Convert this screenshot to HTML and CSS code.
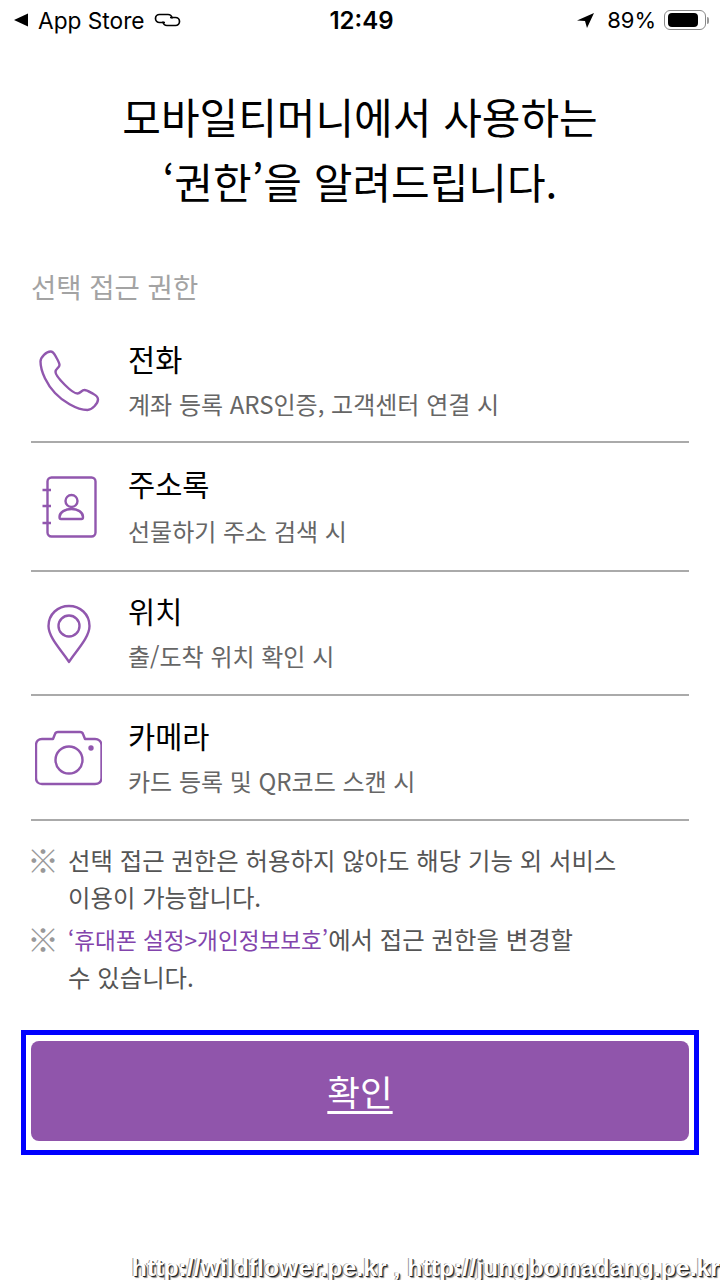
FILE: index.html
```html
<!DOCTYPE html>
<html lang="ko">
<head>
    <meta charset="UTF-8">
    <meta name="viewport" content="width=device-width, initial-scale=1.0">
    <title>권한 안내</title>
    <link rel="stylesheet" href="styles.css">
</head>
<body>

    <div class="status">
        <div class="status-left">
            <svg class="back" width="14" height="14" viewBox="0 0 14 14"><path d="M14 0.500V13.500L0 7Z" fill="#000"/></svg>
            <span>App Store</span>
            <svg class="link" width="27" height="14" viewBox="0 0 27 14" fill="none" stroke="#000" stroke-width="1.700"><path d="M11 9.500H5.500a4 4 0 0 1 0-8H14a4 4 0 0 1 4 4"/><path d="M16 4.500H21.500a4 4 0 0 1 0 8H13a4 4 0 0 1-4-4"/></svg>
        </div>
        <div class="status-time">12:49</div>
        <div class="status-right">
            <svg width="17" height="15" viewBox="0 0 17 15"><path d="M17 0L0 7.500L8 8L10 15Z" fill="#000"/></svg>
            <span>89%</span>
            <div class="battery"><div class="battery-fill"></div></div>
            <div class="battery-cap"></div>
        </div>
    </div>

    <h1 class="title">모바일티머니에서 사용하는<br>‘권한’을 알려드립니다.</h1>

    <h2 class="section">선택 접근 권한</h2>

    <ul class="perm-list">
        <li class="perm perm-phone">
            <div class="perm-icon">
                <svg width="62" height="62" viewBox="0 0 62 62" fill="none" stroke="#9157ae" stroke-width="2.400" stroke-linejoin="round"><path d="M2.500 11.500C2.500 7 8.500 1.500 12.500 1.500C15 1.500 16 3 17.500 6C19 9 21.500 12.500 21.500 15C21.500 18 17.500 18.500 17.500 22C17.500 25 22.500 30.500 27 35C31.500 39.500 36.500 43.500 39.500 43.500C42.500 43.500 43.500 40 46.500 40C49 40 52.500 42.500 55.500 44C58.500 45.500 60 47 60 49.500C60 53.500 54 60 49.500 60C38 60 24 50.500 17 43C9.500 35 2.500 22 2.500 11.500Z"/></svg>
            </div>
            <div class="perm-text">
                <div class="perm-name">전화</div>
                <div class="perm-desc">계좌 등록 ARS인증, 고객센터 연결 시</div>
            </div>
        </li>
        <li class="perm perm-book">
            <div class="perm-icon">
                <svg width="62" height="62" viewBox="0 0 62 62" fill="none" stroke="#9157ae" stroke-width="2.400"><rect x="9.500" y="1.500" width="48" height="59" rx="4"/><path d="M4.500 14H13M4.500 30H13M4.500 47H13"/><circle cx="33.500" cy="25" r="6"/><path d="M21.500 41C21.500 36 27.500 33 33.500 33C39.500 33 45 36 45 41C45 42.500 44.500 43 43.500 43H23C22 43 21.500 42.500 21.500 41Z"/></svg>
            </div>
            <div class="perm-text">
                <div class="perm-name">주소록</div>
                <div class="perm-desc">선물하기 주소 검색 시</div>
            </div>
        </li>
        <li class="perm perm-pin">
            <div class="perm-icon">
                <svg width="62" height="62" viewBox="0 0 62 62" fill="none" stroke="#9157ae" stroke-width="2.400" stroke-linejoin="round"><path d="M31 60C25 50 10.500 36 10.500 24C10.500 12 20 4 31 4C42 4 51.500 12 51.500 24C51.500 36 37 50 31 60Z"/><circle cx="31" cy="24" r="10.500"/></svg>
            </div>
            <div class="perm-text">
                <div class="perm-name">위치</div>
                <div class="perm-desc">출/도착 위치 확인 시</div>
            </div>
        </li>
        <li class="perm perm-camera">
            <div class="perm-icon">
                <svg width="67" height="56" viewBox="0 0 67 56" fill="none" stroke="#9157ae" stroke-width="2.400" stroke-linejoin="round"><path d="M7 9H18L20 4C20.500 2.500 21.500 2 23 2H45C46.500 2 47.500 2.500 48 4L50 9H60C63.500 9 66.500 11.500 66.500 15V48C66.500 52 63.500 54 60 54H7C3.500 54 1 52 1 48V15C1 11.500 3.500 9 7 9Z"/><circle cx="34" cy="30" r="13.500"/><circle cx="56" cy="18" r="1.500" fill="#9157ae"/></svg>
            </div>
            <div class="perm-text">
                <div class="perm-name">카메라</div>
                <div class="perm-desc">카드 등록 및 QR코드 스캔 시</div>
            </div>
        </li>
    </ul>

    <div class="notes">
        <div class="note">
            <span class="note-mark">※</span>
            <p>선택 접근 권한은 허용하지 않아도 해당 기능 외 서비스<br>이용이 가능합니다.</p>
        </div>
        <div class="note">
            <span class="note-mark">※</span>
            <p><span class="accent">‘휴대폰 설정&gt;개인정보보호’</span>에서 접근 권한을 변경할<br>수 있습니다.</p>
        </div>
    </div>

    <div class="confirm-box">
        <button type="button" class="confirm">확인</button>
    </div>

    <div class="watermark">http://wildflower.pe.kr , http://jungbomadang.pe.kr</div>

</body>
</html>
```

FILE: styles.css
```css
* {
    box-sizing: border-box;
}

html, body {
    height: 1280px;
    overflow: hidden;
}

body {
    position: relative;
    margin: 0;
    background: #fff;
    color: #000;
    font-family: "Noto Sans CJK KR", "Noto Sans", sans-serif;
}

.status {
    display: flex;
    align-items: center;
    justify-content: space-between;
    height: 40px;
    padding: 0 11px 0 14px;
    font-family: Inter, "Liberation Sans", sans-serif;
    font-size: 22.700px;
}

.status-left,
.status-right {
    display: flex;
    align-items: center;
    width: 240px;
}

.status-left span {
    margin-left: 10px;
}

.link {
    margin-left: 9px;
}

.status-right {
    justify-content: flex-end;
    font-size: 22px;
}

.status-right span {
    margin: 0 8px 0 13px;
}

.status-time {
    font-size: 24px;
    font-weight: 600;
}

.battery {
    width: 42px;
    height: 20px;
    padding: 2px 7px 2px 3px;
    border: 1.500px solid #888;
    border-radius: 6px;
}

.battery-fill {
    height: 100%;
    background: #000;
    border-radius: 4px;
}

.battery-cap {
    width: 2px;
    height: 7px;
    margin-left: 1px;
    background: #999;
    border-radius: 0 2px 2px 0;
}

.title {
    margin: 43px 0 0;
    font-size: 42px;
    font-weight: 400;
    line-height: 65px;
    text-align: center;
}

.section {
    margin: 53px 31px 0;
    color: #a3a3a3;
    font-size: 27.500px;
    font-weight: 400;
    line-height: 40px;
}

.perm-list {
    margin: 3px 31px 0;
    padding: 0;
    list-style: none;
}

.perm {
    display: flex;
    align-items: center;
    padding-bottom: 3px;
    border-bottom: 2px solid #aaa;
}

.perm-phone {
    height: 134px;
    padding-top: 12px;
}

.perm-book {
    height: 129px;
}

.perm-pin {
    height: 124px;
}

.perm-camera {
    height: 125px;
}

.perm-icon {
    display: flex;
    flex: none;
    justify-content: center;
    width: 97px;
    margin-top: 3px;
    padding-right: 22px;
}

.perm-name {
    font-size: 29.500px;
    line-height: 42px;
}

.perm-desc {
    margin-top: 7px;
    color: #666;
    font-size: 24px;
    line-height: 36px;
}

.perm-book .perm-desc {
    margin-top: 9px;
}

.notes {
    margin: 20px 31px 0;
}

.note {
    display: flex;
    margin-bottom: 5px;
    color: #555;
    font-size: 24.400px;
    line-height: 37px;
}

.note p {
    margin: 0;
}

.note-mark {
    flex: none;
    width: 37px;
    margin-left: -4px;
    margin-right: 4px;
    color: #999;
    font-size: 32px;
}

.accent {
    color: #8244ac;
    font-size: 22.600px;
}

.confirm-box {
    width: 678px;
    height: 125px;
    margin: 35px 0 0 21px;
    padding: 6px 5px 9px;
    border: 5px solid #0000ff;
}

.confirm {
    display: block;
    width: 100%;
    height: 100%;
    padding: 0 0 2px;
    border: none;
    border-radius: 8px;
    background: #9055ab;
    color: #fff;
    font-family: inherit;
    font-size: 35.500px;
    text-decoration: underline;
    text-underline-offset: 5px;
}

.watermark {
    position: absolute;
    right: 0;
    bottom: -2px;
    color: #fff;
    font-family: "Liberation Sans", sans-serif;
    font-size: 24.800px;
    font-weight: 700;
    line-height: 28px;
    white-space: nowrap;
    text-shadow: 1px 1px 0 #222, 2px 2px 1px #888, -1px 0 0 #999;
}
```
